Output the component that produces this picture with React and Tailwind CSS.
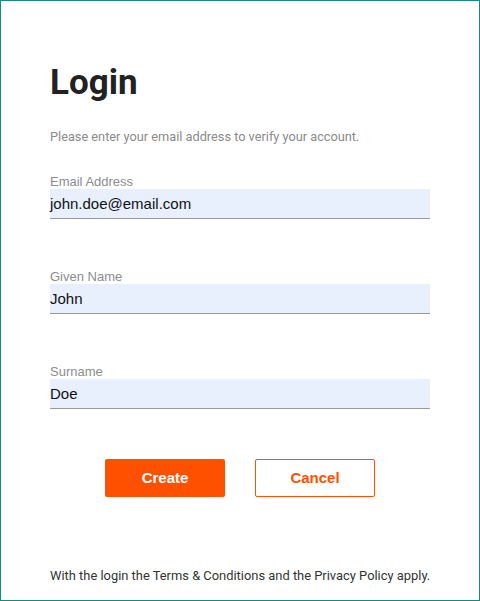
const Field = ({ label, value }) => (
  <div className="flex flex-col">
    <label className="pt-[1px] text-[13px] leading-[15px] text-[#8c8c8c] font-['Liberation_Sans',Arial,sans-serif]">
      {label}
    </label>
    <div className="h-[30px] pt-[2px] bg-[#e8f0fe] border-b border-[#999999] flex items-center text-[15px] text-[#111111] font-['Liberation_Sans',Arial,sans-serif]">
      {value}
    </div>
  </div>
);

export default function App() {
  return (
    <div className="w-[480px] h-[601px] border border-[#138a84] bg-white flex flex-col px-[49px] font-['Roboto',sans-serif]">
      {/* Header */}
      <h1 className="mt-[62px] text-[35px] leading-[40px] font-bold text-[#222222]">
        Login
      </h1>
      <p className="mt-[26px] text-[12.75px] leading-[16px] text-[#8a8a8a] whitespace-nowrap">
        Please enter your email address to verify your account.
      </p>

      {/* Fields */}
      <div className="mt-[28px] flex flex-col gap-[49px]">
        <Field label="Email Address" value="john.doe@email.com" />
        <Field label="Given Name" value="John" />
        <Field label="Surname" value="Doe" />
      </div>

      {/* Actions */}
      <div className="mt-[50px] flex justify-center gap-[30px]">
        <button className="w-[120px] h-[38px] rounded-[2px] bg-[#ff5000] text-white text-[15px] font-bold font-['Liberation_Sans',Arial,sans-serif]">
          Create
        </button>
        <button className="w-[120px] h-[38px] rounded-[2px] border border-[#ff5000] bg-white text-[#ff5000] text-[15px] font-bold font-['Liberation_Sans',Arial,sans-serif]">
          Cancel
        </button>
      </div>

      {/* Footer */}
      <p className="mt-auto mb-[16px] text-[12.9px] leading-[16px] text-[#333333] whitespace-nowrap">
        With the login the Terms &amp; Conditions and the Privacy Policy apply.
      </p>
    </div>
  );
}
